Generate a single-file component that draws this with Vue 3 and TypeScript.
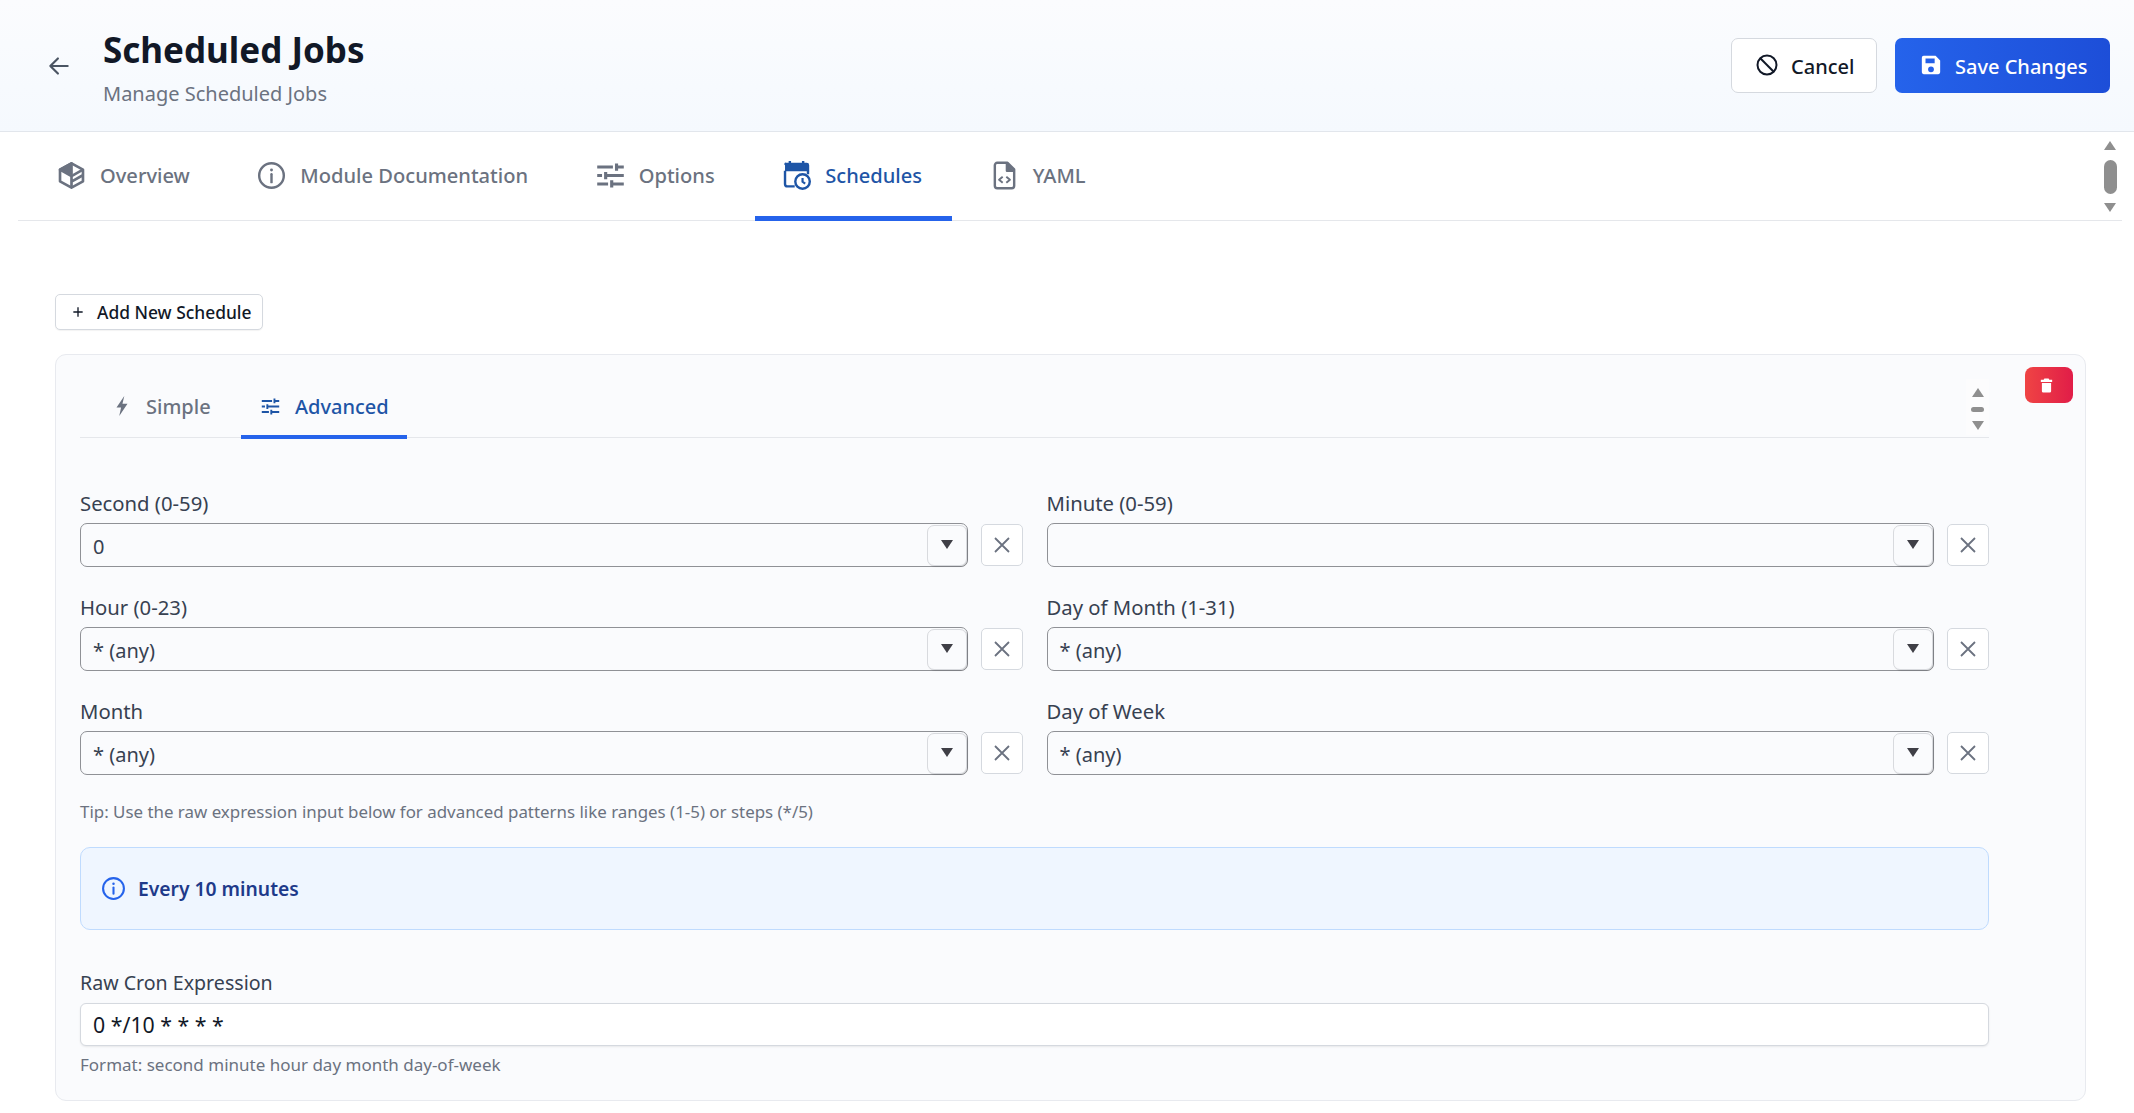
<script setup lang="ts">
const tabs = [
  { key: 'overview', label: 'Overview' },
  { key: 'docs', label: 'Module Documentation' },
  { key: 'options', label: 'Options' },
  { key: 'schedules', label: 'Schedules' },
  { key: 'yaml', label: 'YAML' },
];

const fields = [
  { label: 'Second (0-59)', value: '0' },
  { label: 'Minute (0-59)', value: '' },
  { label: 'Hour (0-23)', value: '* (any)' },
  { label: 'Day of Month (1-31)', value: '* (any)' },
  { label: 'Month', value: '* (any)' },
  { label: 'Day of Week', value: '* (any)' },
];
</script>

<template>
  <div class="page">
    <header class="header">
      <svg class="back" viewBox="0 0 24 24" fill="none" stroke="currentColor" stroke-width="2" stroke-linecap="round" stroke-linejoin="round">
        <path d="M20 12H4M11 5l-7 7 7 7" />
      </svg>
      <div class="titles">
        <h1>Scheduled Jobs</h1>
        <p>Manage Scheduled Jobs</p>
      </div>
      <div class="actions">
        <button class="btn-cancel">
          <svg viewBox="0 0 24 24" fill="none" stroke="currentColor" stroke-width="2">
            <circle cx="12" cy="12" r="9.5" />
            <path d="M5.3 5.3l13.4 13.4" />
          </svg>
          Cancel
        </button>
        <button class="btn-save">
          <svg viewBox="0 0 24 24" fill="currentColor">
            <path fill-rule="evenodd" d="M4 2h13l5 5v13a2 2 0 0 1-2 2H4a2 2 0 0 1-2-2V4a2 2 0 0 1 2-2zm2 3v5h10V5H6zm6 8.5a3.2 3.2 0 1 0 0 6.4 3.2 3.2 0 0 0 0-6.4z" />
          </svg>
          Save Changes
        </button>
      </div>
    </header>

    <nav class="tabs">
      <a v-for="tab in tabs" :key="tab.key" :class="['tab', { active: tab.key === 'schedules' }]">
        <svg v-if="tab.key === 'overview'" viewBox="0 0 24 24" fill="none" stroke="currentColor" stroke-width="2.2" stroke-linejoin="round">
          <path d="M12 2l9.5 5.2v9.6L12 22l-9.5-5.2V7.2z" />
          <path d="M12 2v8.5L2.5 7.2z" fill="currentColor" />
          <path d="M2.5 7.2L12 12.5V22M12 12.5l9.5-5.3M12 17l9-5" />
        </svg>
        <svg v-else-if="tab.key === 'docs'" viewBox="0 0 24 24" fill="none" stroke="currentColor" stroke-width="2">
          <circle cx="12" cy="12" r="10.2" />
          <path d="M12 11v6.5" stroke-linecap="round" />
          <circle cx="12" cy="7.5" r="1.2" fill="currentColor" stroke="none" />
        </svg>
        <svg v-else-if="tab.key === 'options'" viewBox="0 0 24 24" fill="none" stroke="currentColor" stroke-width="2.6">
          <path d="M1 5h13M18 5h5M17 2v6M1 12h4M9 12h14M8 9v6M1 19h9M14 19h9M13 16v6" />
        </svg>
        <svg v-else-if="tab.key === 'schedules'" viewBox="0 0 24 24">
          <path d="M3.5 1.5h17a2 2 0 0 1 2 2v5h-20v-5a1 1 0 0 1 1-2z" fill="currentColor" />
          <path d="M6.5 0v3M17.5 0v3" stroke="currentColor" stroke-width="2" />
          <path d="M2.5 8v11a2 2 0 0 0 2 2h6M21.5 8v3" fill="none" stroke="currentColor" stroke-width="2" />
          <circle cx="17" cy="17" r="6" fill="#fff" stroke="currentColor" stroke-width="2" />
          <path d="M17 14v3.2l2.2 1.6" fill="none" stroke="currentColor" stroke-width="1.8" />
        </svg>
        <svg v-else viewBox="0 0 24 24" fill="none" stroke="currentColor" stroke-width="2" stroke-linejoin="round">
          <path d="M14.5 1.5H6a2 2 0 0 0-2 2v17a2 2 0 0 0 2 2h12a2 2 0 0 0 2-2V7z" />
          <path d="M14 1.5V8h6" fill="currentColor" />
          <path d="M10.5 13l-3 2.5 3 2.5M13.5 13l3 2.5-3 2.5" stroke-width="1.6" />
        </svg>
        {{ tab.label }}
      </a>
      <div class="scroller main-scroller">
        <i class="arrow up" />
        <i class="thumb" />
        <i class="arrow down" />
      </div>
    </nav>

    <main class="content">
      <button class="btn-add">
        <svg viewBox="0 0 24 24" fill="none" stroke="currentColor" stroke-width="2">
          <path d="M12 5v14M5 12h14" />
        </svg>
        Add New Schedule
      </button>

      <section class="card">
        <button class="btn-delete">
          <svg viewBox="0 0 24 24" fill="currentColor">
            <path d="M9 2h6l1 2h4v3H4V4h4zM5.5 8.5h13V20a2 2 0 0 1-2 2h-9a2 2 0 0 1-2-2z" />
          </svg>
        </button>

        <nav class="subtabs">
          <a class="subtab">
            <svg viewBox="0 0 24 24" fill="currentColor">
              <path d="M14.5 1L6 13.5h5L9 23l9-13.5h-5.500z" />
            </svg>
            Simple
          </a>
          <a class="subtab active">
            <svg viewBox="0 0 24 24" fill="none" stroke="currentColor" stroke-width="2.4">
              <path d="M1 5h13M18 5h5M17 2v6M1 12h4M9 12h14M8 9v6M1 19h9M14 19h9M13 16v6" />
            </svg>
            Advanced
          </a>
          <div class="scroller sub-scroller">
            <i class="arrow up" />
            <i class="thumb" />
            <i class="arrow down" />
          </div>
        </nav>

        <div class="fields">
          <div v-for="field in fields" :key="field.label" class="field">
            <label>{{ field.label }}</label>
            <div class="field-row">
              <div class="select">
                <span>{{ field.value }}</span>
                <span class="caret"><i /></span>
              </div>
              <button class="btn-clear">
                <svg viewBox="0 0 24 24" fill="none" stroke="currentColor" stroke-width="1.8">
                  <path d="M5 5l14 14M19 5L5 19" />
                </svg>
              </button>
            </div>
          </div>
        </div>

        <p class="tip">Tip: Use the raw expression input below for advanced patterns like ranges (1-5) or steps (*/5)</p>

        <div class="summary">
          <svg viewBox="0 0 24 24" fill="none" stroke="currentColor" stroke-width="2">
            <circle cx="12" cy="12" r="10" />
            <path d="M12 11v6" stroke-linecap="round" />
            <circle cx="12" cy="7.5" r="1.2" fill="currentColor" stroke="none" />
          </svg>
          Every 10 minutes
        </div>

        <label class="raw-label">Raw Cron Expression</label>
        <div class="raw-input">0 */10 * * * *</div>
        <p class="format">Format: second minute hour day month day-of-week</p>
      </section>
    </main>
  </div>
</template>

<style>
body {
  margin: 0;
  background: #fff;
}
</style>

<style scoped>
.page {
  width: 2134px;
  height: 1113px;
  overflow: hidden;
  font-family: "Noto Sans", "Open Sans", sans-serif;
  color: #111827;
  background: #fff;
}

button {
  font-family: inherit;
}

.header {
  box-sizing: border-box;
  display: flex;
  align-items: center;
  height: 132px;
  padding: 0 24px 0 46px;
  background: linear-gradient(180deg, #fbfcfe, #f5f9fe);
  border-bottom: 1.4px solid #e2e6ec;
}

.back {
  width: 26px;
  height: 26px;
  margin-right: 31px;
  color: #4b5563;
}

.titles {
  padding-top: 5px;
}

.titles h1 {
  margin: 0;
  font-size: 35px;
  font-weight: 700;
  line-height: 42px;
  color: #111827;
}

.titles p {
  margin: 10px 0 0;
  font-size: 20px;
  line-height: 26px;
  color: #6b7280;
}

.actions {
  display: flex;
  gap: 18px;
  margin-left: auto;
}

.actions button {
  box-sizing: border-box;
  display: flex;
  align-items: center;
  height: 55px;
  padding-top: 2px;
  font-size: 20px;
  font-weight: 500;
  border-radius: 7px;
}

.btn-cancel {
  gap: 12px;
  width: 146px;
  padding-left: 23px;
  color: #111827;
  background: #fff;
  border: 1.4px solid #d5d9df;
}

.btn-cancel svg {
  width: 24px;
  height: 24px;
  margin-top: -2px;
}

.btn-save {
  gap: 13px;
  width: 215px;
  padding-left: 25px;
  color: #fff;
  background: linear-gradient(90deg, #2563eb, #1d4ed8);
  border: 0;
}

.btn-save svg {
  width: 22px;
  height: 22px;
  margin-top: -2px;
}

.tabs {
  display: flex;
  align-items: stretch;
  height: 89px;
  box-sizing: border-box;
  margin: 0 12px 0 18px;
  padding-left: 12px;
  border-bottom: 1.4px solid #e5e7eb;
}

.tab {
  position: relative;
  display: flex;
  align-items: center;
  gap: 14px;
  padding: 0 30px 2px 27px;
  margin-right: 10.6px;
  font-size: 20.1px;
  font-weight: 500;
  color: #6b7280;
}

.tab svg {
  width: 29px;
  height: 29px;
}

.tab.active {
  color: #1e55a6;
}

.tab.active::after {
  content: "";
  position: absolute;
  left: 0;
  right: 0;
  bottom: -1px;
  height: 5px;
  background: #2563eb;
}

.scroller {
  display: flex;
  flex-direction: column;
  align-items: center;
  justify-content: space-between;
}

.main-scroller {
  width: 22px;
  margin: 9px 1px 8px auto;
}

.main-scroller .thumb {
  width: 13px;
  height: 34px;
  border-radius: 7px;
  background: #8f8f8f;
}

.arrow {
  width: 0;
  height: 0;
  border-left: 6px solid transparent;
  border-right: 6px solid transparent;
}

.arrow.up {
  border-bottom: 9px solid #8f8f8f;
}

.arrow.down {
  border-top: 9px solid #8f8f8f;
}

.content {
  padding: 73px 48px 0 55px;
}

.btn-add {
  box-sizing: border-box;
  display: flex;
  align-items: center;
  gap: 11px;
  width: 208px;
  height: 36px;
  padding: 0 0 0 14px;
  font-size: 17.4px;
  font-weight: 500;
  color: #111827;
  background: #fff;
  border: 1.4px solid #d5d9df;
  border-radius: 5px;
  box-shadow: 0 1px 1px rgba(0, 0, 0, 0.05);
}

.btn-add svg {
  width: 16px;
  height: 16px;
}

.card {
  position: relative;
  box-sizing: border-box;
  height: 747px;
  margin-top: 24px;
  padding: 0 96px 0 24px;
  background: #fafbfd;
  border: 1.4px solid #e8eaef;
  border-radius: 11px;
}

.btn-delete {
  position: absolute;
  top: 12px;
  right: 12px;
  display: flex;
  align-items: center;
  justify-content: center;
  width: 48px;
  height: 36px;
  padding: 0 6px 0 0;
  color: #fff;
  background: linear-gradient(90deg, #ef4444, #e11d48);
  border: 0;
  border-radius: 8px;
}

.btn-delete svg {
  width: 17px;
  height: 17px;
}

.subtabs {
  display: flex;
  align-items: stretch;
  box-sizing: border-box;
  height: 83px;
  padding-top: 27px;
  border-bottom: 1.4px solid #e5e7eb;
}

.subtab {
  position: relative;
  display: flex;
  align-items: center;
  gap: 15px;
  height: 56px;
  box-sizing: border-box;
  padding-bottom: 8px;
  font-size: 20px;
  font-weight: 500;
  color: #6b7280;
}

.subtab:first-child {
  width: 161px;
  padding-left: 31px;
  gap: 13px;
}

.subtab:first-child svg {
  width: 22px;
  height: 22px;
}

.subtab.active {
  width: 166px;
  padding-left: 20px;
  color: #1e55a6;
}

.subtab svg {
  width: 19px;
  height: 19px;
}

.subtab.active::after {
  content: "";
  position: absolute;
  left: 0;
  right: 0;
  bottom: -1px;
  height: 4px;
  background: #2563eb;
}

.sub-scroller {
  position: relative;
  top: -3px;
  box-sizing: border-box;
  width: 23px;
  height: 56px;
  margin: 0 0 3px auto;
  padding: 9px 0 5px;
  background: #fcfcfd;
}

.sub-scroller .thumb {
  width: 13px;
  height: 5px;
  border-radius: 3px;
  background: #8f8f8f;
}

.fields {
  display: grid;
  grid-template-columns: 1fr 1fr;
  column-gap: 24px;
  row-gap: 20px;
  margin-top: 45px;
}

.field label {
  display: block;
  height: 40px;
  font-size: 20.3px;
  line-height: 40px;
  color: #374151;
}

.field-row {
  display: flex;
  align-items: center;
  gap: 13px;
}

.select {
  box-sizing: border-box;
  display: flex;
  align-items: center;
  justify-content: space-between;
  flex: 1;
  height: 44px;
  padding: 0 0 0 12px;
  font-size: 20px;
  color: #374151;
  border: 1.4px solid #8f9196;
  border-radius: 7px;
}

.select > span:first-child {
  padding-top: 3px;
}

.caret {
  box-sizing: border-box;
  display: flex;
  align-items: center;
  justify-content: center;
  width: 40px;
  height: 41px;
  background: #fafbfd;
  border: 1.4px solid #d8dade;
  border-radius: 7px;
  box-shadow: 1px 1px 1px rgba(0, 0, 0, 0.12);
}

.caret i {
  width: 0;
  height: 0;
  margin-top: -2px;
  border-left: 6px solid transparent;
  border-right: 6px solid transparent;
  border-top: 9px solid #3f3f46;
}

.btn-clear {
  box-sizing: border-box;
  display: flex;
  align-items: center;
  justify-content: center;
  flex: none;
  width: 42px;
  height: 42px;
  padding: 0;
  color: #6b7280;
  background: #fff;
  border: 1.4px solid #d5d9df;
  border-radius: 5px;
}

.btn-clear svg {
  width: 24px;
  height: 24px;
}

.tip {
  margin: 25px 0 0;
  font-size: 16.9px;
  line-height: 24px;
  color: #6b7280;
}

.summary {
  box-sizing: border-box;
  display: flex;
  align-items: center;
  gap: 12px;
  height: 83px;
  margin-top: 23px;
  padding: 0 0 0 20px;
  font-size: 19.3px;
  font-weight: 600;
  color: #1e3a8a;
  background: #eff6ff;
  border: 1.4px solid #bfdbfe;
  border-radius: 10px;
}

.summary svg {
  width: 25px;
  height: 25px;
  color: #2563eb;
}

.raw-label {
  display: block;
  margin-top: 39px;
  font-size: 19.6px;
  line-height: 28px;
  color: #374151;
}

.raw-input {
  box-sizing: border-box;
  display: flex;
  align-items: center;
  height: 43px;
  margin-top: 6px;
  padding: 0 0 0 12px;
  font-size: 21.3px;
  color: #111827;
  background: #fff;
  border: 1.4px solid #d5d9df;
  border-radius: 6px;
  box-shadow: 0 1px 2px rgba(0, 0, 0, 0.08);
}

.format {
  margin: 7px 0 0;
  font-size: 17px;
  line-height: 24px;
  color: #6b7280;
}
</style>
